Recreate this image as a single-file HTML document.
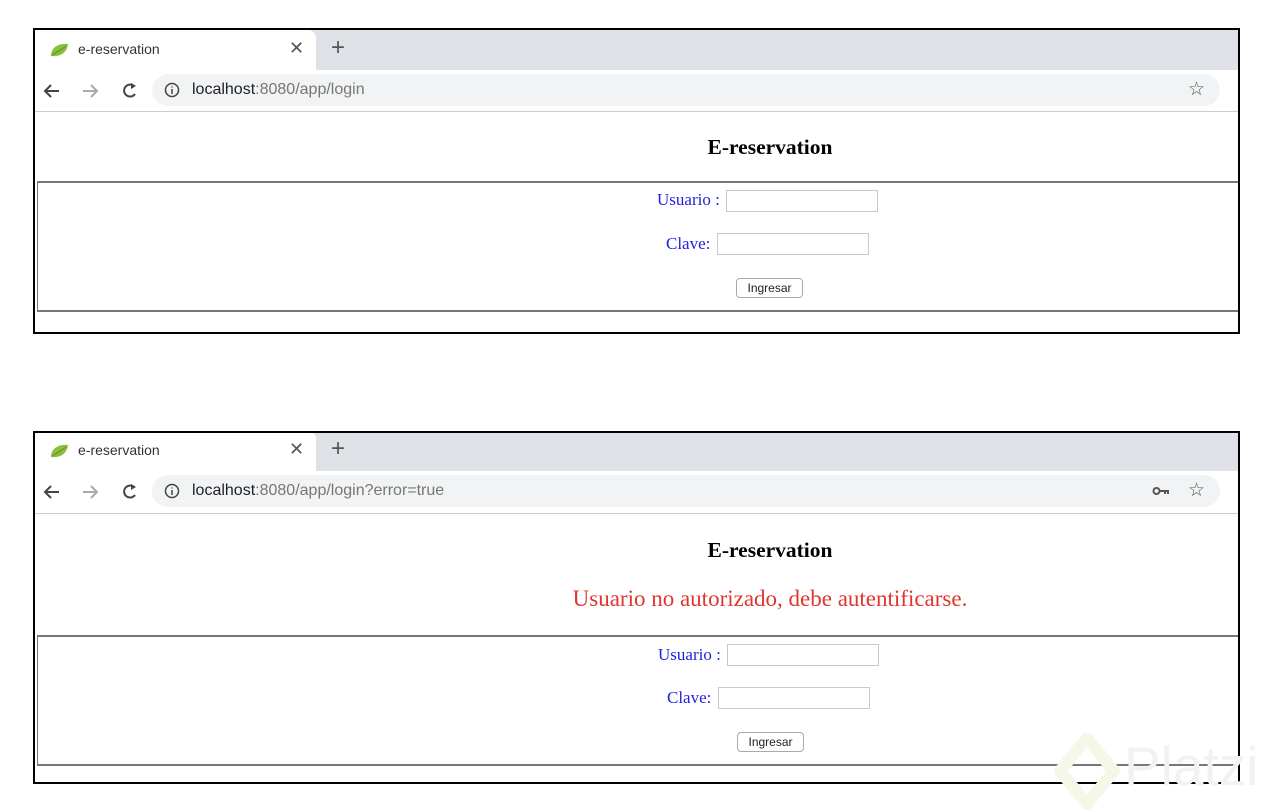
<!DOCTYPE html>
<html><head><meta charset="utf-8"><style>
*{margin:0;padding:0;box-sizing:border-box}
body{width:1278px;height:812px;background:#fff;position:relative;overflow:hidden;font-family:"Liberation Sans",sans-serif}
.a{position:absolute}
.frame{position:absolute;left:33px;width:1207px;border:2px solid #000;overflow:hidden;background:#fff}
.strip{position:absolute;left:0;top:0;width:100%;height:40px;background:#dee1e6}
.tab{position:absolute;left:0;top:0;width:281px;height:40px;background:#fff;border-radius:0 8px 0 0}
.tabt{position:absolute;left:43px;top:11px;font-size:14px;color:#333}
.x{position:absolute;left:254px;top:8px;font-size:18px;color:#555}
.plus{position:absolute;left:296px;top:4px;font-size:24px;color:#555;font-weight:300}
.omni{position:absolute;left:117px;top:44px;width:1068px;height:32px;background:#f1f3f4;border-radius:16px}
.url{position:absolute;left:40px;top:7px;font-size:16px;color:#202124}
.url span{color:#777}
.sep{position:absolute;left:0;top:81px;width:100%;height:1px;background:#ccc}
.title{position:absolute;width:400px;left:535px;text-align:center;font-family:"Liberation Serif",serif;font-weight:bold;font-size:21.5px;color:#000}
.box{position:absolute;left:2px;width:1210px;border:1px solid #777;border-top:2px solid #777;border-bottom:2px solid #777}
.lbl{position:absolute;font-family:"Liberation Serif",serif;font-size:17px;color:#2222dd}
.inp{position:absolute;width:152px;height:22px;border:1px solid #c8c8c8;background:#fff}
.btn{position:absolute;width:67px;height:20px;border:1px solid #aaa;border-radius:4px;background:#fff;font-size:12px;text-align:center;line-height:18px;color:#222}
</style></head><body>

<!-- Frame 1 -->
<div class="frame" style="top:28px;height:306px">
  <div class="strip"></div>
  <div class="tab">
    <svg class="a" style="left:14px;top:12px" width="20" height="16" viewBox="0 0 20 16"><path d="M2 14 C2 5 10 1 19 2 C18 11 11 15 2 14Z" fill="#8bbf3f"/><path d="M3 13 C8 10 12 8 17 4" stroke="#5d8f23" stroke-width="1" fill="none"/></svg>
    <div class="tabt">e-reservation</div>
    <div class="x">✕</div>
  </div>
  <div class="plus">+</div>
  <svg class="a" style="left:6px;top:50px" width="110" height="22" viewBox="0 0 110 22">
    <path d="M18 11H4M10 5L4 11L10 17" stroke="#444" stroke-width="2" fill="none"/>
    <path d="M42 11H56M50 5L56 11L50 17" stroke="#aaa" stroke-width="2" fill="none"/>
    <path d="M93 6A6 6 0 1 0 94 14" stroke="#444" stroke-width="2" fill="none"/><path d="M90 3L95 6L90 9Z" fill="#444"/>
  </svg>
  <div class="omni">
    <svg class="a" style="left:12px;top:8px" width="16" height="16" viewBox="0 0 16 16"><circle cx="8" cy="8" r="6.5" stroke="#444" stroke-width="1.5" fill="none"/><path d="M8 7V12M8 4.5V5.5" stroke="#444" stroke-width="1.5"/></svg>
    <div class="url">localhost<span>:8080/app/login</span></div>
    <div class="a" style="left:1036px;top:4px;font-size:19px;color:#555">☆</div>
  </div>
  <div class="sep"></div>
  <div class="title" style="top:105px">E-reservation</div>
  <div class="box" style="top:151px;height:131px"></div>
  <div class="lbl" style="left:622px;top:160px">Usuario :</div>
  <div class="inp" style="left:691px;top:160px"></div>
  <div class="lbl" style="left:631px;top:204px">Clave:</div>
  <div class="inp" style="left:682px;top:203px"></div>
  <div class="btn" style="left:701px;top:248px">Ingresar</div>
</div>

<!-- Frame 2 -->
<div class="frame" style="top:431px;height:353px">
 <div class="a" style="left:0;top:-2px;width:100%;height:100%">
  <div class="strip"></div>
  <div class="tab">
    <svg class="a" style="left:14px;top:12px" width="20" height="16" viewBox="0 0 20 16"><path d="M2 14 C2 5 10 1 19 2 C18 11 11 15 2 14Z" fill="#8bbf3f"/><path d="M3 13 C8 10 12 8 17 4" stroke="#5d8f23" stroke-width="1" fill="none"/></svg>
    <div class="tabt">e-reservation</div>
    <div class="x">✕</div>
  </div>
  <div class="plus">+</div>
  <svg class="a" style="left:6px;top:50px" width="110" height="22" viewBox="0 0 110 22">
    <path d="M18 11H4M10 5L4 11L10 17" stroke="#444" stroke-width="2" fill="none"/>
    <path d="M42 11H56M50 5L56 11L50 17" stroke="#aaa" stroke-width="2" fill="none"/>
    <path d="M93 6A6 6 0 1 0 94 14" stroke="#444" stroke-width="2" fill="none"/><path d="M90 3L95 6L90 9Z" fill="#444"/>
  </svg>
  <div class="omni">
    <svg class="a" style="left:12px;top:8px" width="16" height="16" viewBox="0 0 16 16"><circle cx="8" cy="8" r="6.5" stroke="#444" stroke-width="1.5" fill="none"/><path d="M8 7V12M8 4.5V5.5" stroke="#444" stroke-width="1.5"/></svg>
    <div class="url">localhost<span>:8080/app/login?error=true</span></div>
    <svg class="a" style="left:1000px;top:11px" width="18" height="10" viewBox="0 0 18 10"><circle cx="4.5" cy="5" r="3" stroke="#555" stroke-width="2" fill="none"/><path d="M7.5 5H17M13 5V8M16 5V8" stroke="#555" stroke-width="2"/></svg>
    <div class="a" style="left:1036px;top:4px;font-size:19px;color:#555">☆</div>
  </div>
  <div class="sep" style="top:82px"></div>
 </div>
  <div class="title" style="top:105px">E-reservation</div>
  <div class="a" style="left:385px;width:700px;text-align:center;top:153px;font-family:'Liberation Serif',serif;font-size:23px;color:#e0352f">Usuario no autorizado, debe autentificarse.</div>
  <div class="box" style="top:202px;height:131px"></div>
  <div class="lbl" style="left:623px;top:212px">Usuario :</div>
  <div class="inp" style="left:692px;top:211px"></div>
  <div class="lbl" style="left:632px;top:255px">Clave:</div>
  <div class="inp" style="left:683px;top:254px"></div>
  <div class="btn" style="left:702px;top:299px">Ingresar</div>
</div>

<!-- Platzi watermark -->
<svg class="a" style="left:1050px;top:730px" width="75" height="82" viewBox="0 0 75 82"><path d="M37 8L64 41L37 74L10 41Z" stroke="#f3f8e8" stroke-width="12" stroke-linejoin="round" fill="none"/></svg>
<div class="a" style="left:1124px;top:733px;font-size:55px;line-height:66px;color:#f2f2f2;font-family:'Liberation Sans',sans-serif">Platzi</div>
</body></html>
